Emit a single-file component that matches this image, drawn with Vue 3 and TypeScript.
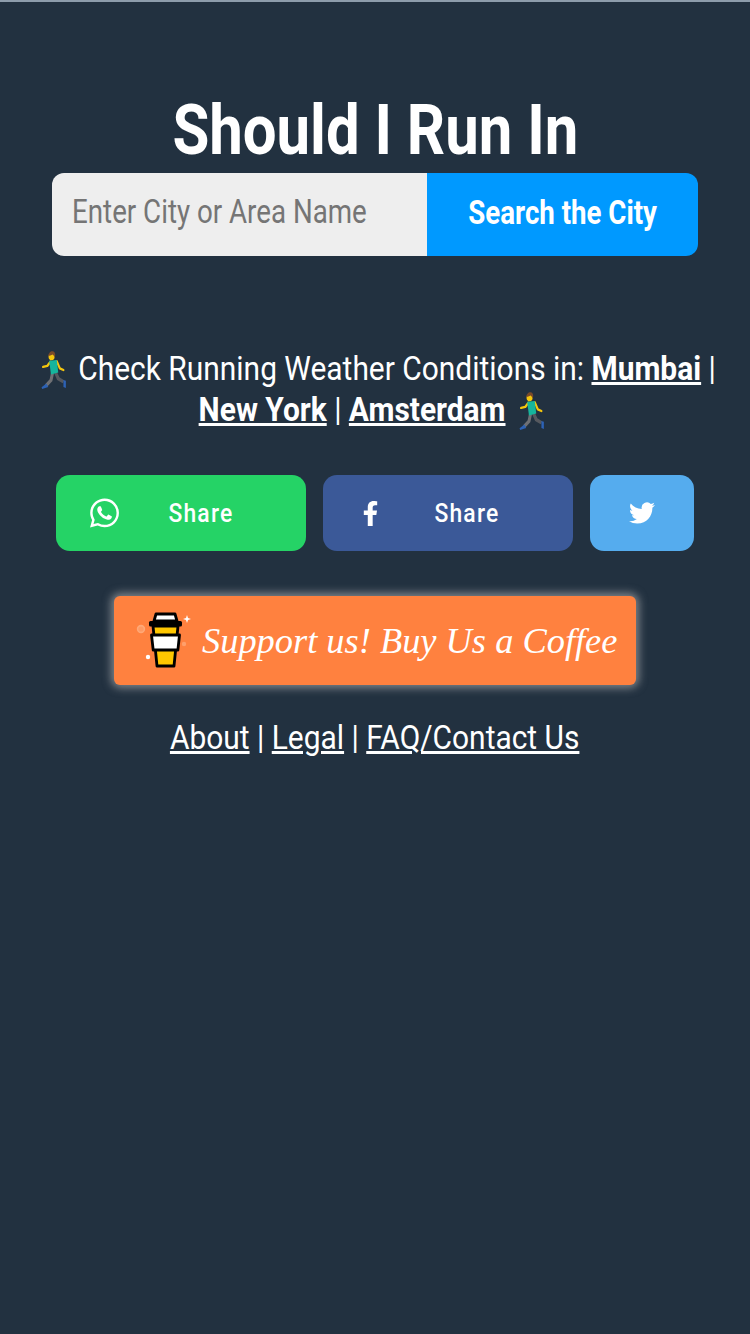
<script setup lang="ts">
const quick: string[] = ['Mumbai', 'New York', 'Amsterdam']
const footer: string[] = ['About', 'Legal', 'FAQ/Contact Us']
</script>

<template>
  <div class="page">
    <div class="strip"></div>
    <h1 class="title"><span class="narrow title-text">Should I Run In</span></h1>
    <form class="search" @submit.prevent>
      <div class="field"><span class="narrow-left">Enter City or Area Name</span></div>
      <button class="go" type="button"><span class="narrow go-text">Search the City</span></button>
    </form>

    <div class="check">
      <div class="line line-one">
        <span class="narrow">
          <svg class="runner first" viewBox="0 0 80 110" aria-hidden="true">
            <defs>
              <g id="run">
                <path d="M46 62l9 18 17 9" fill="none" stroke="#55585e" stroke-width="10" stroke-linejoin="round" />
                <path d="M72 84l8 2 0 21-8-3z" fill="#2d62b5" />
                <path d="M36 64l-5 21-16 15" fill="none" stroke="#6f7074" stroke-width="10" stroke-linejoin="round" />
                <path d="M16 94l-16 11 2 5 20-6z" fill="#2d62b5" />
                <path d="M50 30l10 20 12 5" fill="none" stroke="#f5c60d" stroke-width="7" stroke-linecap="round" stroke-linejoin="round" />
                <path d="M29 31l-10 12-14 3" fill="none" stroke="#f5c60d" stroke-width="7" stroke-linecap="round" stroke-linejoin="round" />
                <path d="M25 28l25-2 5 36-24 6z" fill="#16b59c" />
                <circle cx="33" cy="17" r="10" fill="#f5c60d" />
                <path d="M22 16c0-10 8-16 15-15 8 2 9 10 7 17l-7-8c-6 3-10 2-15 6z" fill="#7a4a2a" />
              </g>
            </defs>
            <use href="#run" />
          </svg>
          Check Running Weather Conditions in: <a href="#" class="bold">{{ quick[0] }}</a> |
        </span>
      </div>
      <div class="line line-two">
        <span class="narrow">
          <a href="#" class="bold">{{ quick[1] }}</a> | <a href="#" class="bold">{{ quick[2] }}</a>
          <svg class="runner last" viewBox="0 0 80 110" aria-hidden="true"><use href="#run" /></svg>
        </span>
      </div>
    </div>

    <div class="shares">
      <a class="share wa" href="#">
        <svg class="wa-ic" viewBox="0 0 24 24"><path fill="#fff" d="M17.472 14.382c-.297-.149-1.758-.867-2.03-.967-.273-.099-.471-.148-.67.15-.197.297-.767.966-.94 1.164-.173.199-.347.223-.644.075-.297-.15-1.255-.463-2.39-1.475-.883-.788-1.48-1.761-1.653-2.059-.173-.297-.018-.458.13-.606.134-.133.298-.347.446-.52.149-.174.198-.298.298-.497.099-.198.05-.371-.025-.52-.075-.149-.669-1.612-.916-2.207-.242-.579-.487-.5-.669-.51-.173-.008-.371-.01-.57-.01-.198 0-.52.074-.792.372-.272.297-1.04 1.016-1.04 2.479 0 1.462 1.065 2.875 1.213 3.074.149.198 2.096 3.2 5.077 4.487.709.306 1.262.489 1.694.625.712.227 1.36.195 1.871.118.571-.085 1.758-.719 2.006-1.413.248-.694.248-1.289.173-1.413-.074-.124-.272-.198-.57-.347m-5.421 7.403h-.004a9.87 9.87 0 01-5.031-1.378l-.361-.214-3.741.982.998-3.648-.235-.374a9.86 9.86 0 01-1.51-5.26c.001-5.45 4.436-9.884 9.888-9.884 2.64 0 5.122 1.03 6.988 2.898a9.825 9.825 0 012.893 6.994c-.003 5.45-4.437 9.884-9.885 9.884m8.413-18.297A11.815 11.815 0 0012.05 0C5.495 0 .16 5.335.157 11.892c0 2.096.547 4.142 1.588 5.945L.057 24l6.305-1.654a11.882 11.882 0 005.683 1.448h.005c6.554 0 11.89-5.335 11.893-11.893a11.821 11.821 0 00-3.48-8.413z"/></svg>
        <span class="share-label wa-label"><span class="narrow">Share</span></span>
      </a>
      <a class="share fb" href="#">
        <svg class="fb-ic" viewBox="0 0 320 512"><path fill="#fff" d="M279.14 288l14.22-92.66h-88.91v-60.13c0-25.35 12.42-50.06 52.24-50.06h40.42V6.26S260.43 0 225.36 0c-73.22 0-121.08 44.38-121.08 124.72v70.62H22.89V288h81.39v224h100.17V288z"/></svg>
        <span class="share-label fb-label"><span class="narrow">Share</span></span>
      </a>
      <a class="tw" href="#">
        <svg class="tw-ic" viewBox="0 0 24 24"><path fill="#fff" d="M23.953 4.57a10 10 0 01-2.825.775 4.958 4.958 0 002.163-2.723c-.951.555-2.005.959-3.127 1.184a4.92 4.92 0 00-8.384 4.482C7.69 8.095 4.067 6.13 1.64 3.162a4.822 4.822 0 00-.666 2.475c0 1.71.87 3.213 2.188 4.096a4.904 4.904 0 01-2.228-.616v.06a4.923 4.923 0 003.946 4.827 4.996 4.996 0 01-2.212.085 4.936 4.936 0 004.604 3.417 9.867 9.867 0 01-6.102 2.105c-.39 0-.779-.023-1.17-.067a13.995 13.995 0 007.557 2.209c9.053 0 13.998-7.496 13.998-13.985 0-.21 0-.42-.015-.63A9.935 9.935 0 0024 4.59z"/></svg>
      </a>
    </div>

    <a class="coffee" href="#">
      <svg class="cup" viewBox="0 0 56 60" aria-hidden="true">
        <circle cx="5" cy="18" r="3.4" fill="#ff9a63" stroke="#ffa877" stroke-width="1.6" />
        <circle cx="48" cy="33" r="2.2" fill="#ff9f6b" />
        <circle cx="12" cy="46" r="2.2" fill="#fff" />
        <path d="M51 4l1 3 3 1-3 1-1 3-1-3-3-1 3-1z" fill="#fff" />
        <path d="M17 15h25l-4 40H21z" fill="#ffc700" stroke="#000" stroke-width="2.8" stroke-linejoin="round" />
        <path d="M15.5 24h28l-1.6 15H17.2z" fill="#fff" stroke="#000" stroke-width="2.8" stroke-linejoin="round" />
        <path d="M20 3h19l2 7H18z" fill="#fff" stroke="#000" stroke-width="2.8" stroke-linejoin="round" />
        <rect x="13" y="10" width="33" height="5.5" rx="1.5" fill="#000" />
      </svg>
      <span class="coffee-text">Support us! Buy Us a Coffee</span>
    </a>

    <div class="foot">
      <span class="narrow">
        <a href="#">{{ footer[0] }}</a> | <a href="#">{{ footer[1] }}</a> | <a href="#">{{ footer[2] }}</a>
      </span>
    </div>
  </div>
</template>

<style>
html, body { margin: 0; background: #223140; }
</style>

<style scoped>
.page {
  min-height: 1334px;
  box-sizing: border-box;
  background: #223140;
  color: #fff;
  font-family: Roboto, "Liberation Sans", sans-serif;
  display: flex;
  flex-direction: column;
  align-items: center;
  text-align: center;
  overflow: hidden;
}
.strip { align-self: stretch; height: 2px; background: #8d9cab; }
.narrow { display: inline-block; white-space: nowrap; transform: scaleX(.88); }
.narrow-left { display: inline-block; white-space: nowrap; transform: scaleX(.84); transform-origin: left center; }
.title-text { transform: scaleX(.855); }
.go-text { transform: scaleX(.838); }
.title { margin: 90px 0 0; height: 81px; line-height: 76px; font-size: 70px; font-weight: 700; }
.search { width: 646px; height: 83px; display: flex; border-radius: 12px; overflow: hidden; }
.field { flex: 1; background: #eee; color: #757575; font-size: 33px; line-height: 77px; text-align: left; padding-left: 20px; }
.go { width: 271px; border: 0; background: #0099ff; color: #fff; font: 700 33px Roboto, sans-serif; padding: 0 0 4px; }
.check { margin-top: 92px; font-size: 34px; line-height: 41px; }
.line { display: flex; justify-content: center; }
.line-one { padding-left: 6px; }
.line-two { padding-right: 6px; }
.bold { font-weight: 700; }
a { color: #fff; text-decoration: underline; }
.runner { display: inline-block; width: 31px; height: 38px; vertical-align: -9px; }
.runner.first { margin-right: 4px; }
.runner.last { margin-left: 14px; }
.shares { margin-top: 45px; display: flex; gap: 17px; }
.share, .tw { height: 76px; border-radius: 14px; display: flex; align-items: center; text-decoration: none; box-sizing: border-box; }
.share { width: 250px; }
.wa { background: #25d366; padding-left: 34px; }
.fb { background: #3b5998; padding-left: 39px; }
.tw { width: 104px; background: #55acee; justify-content: center; }
.wa-ic { width: 29px; height: 32px; flex: none; }
.fb-ic { width: 17px; height: 25px; flex: none; }
.tw-ic { width: 26px; height: 26px; }
.share-label { flex: 1; text-align: center; font-size: 26px; font-weight: 500; letter-spacing: 1.35px; }
.wa-label { padding-right: 24px; }
.fb-label { padding-right: 18px; }
.coffee {
  margin-top: 45px;
  width: 522px; height: 89px;
  background: #ff813f;
  border-radius: 6px;
  box-shadow: 0 0 9px 3px rgba(190, 190, 190, .6);
  display: flex; align-items: center;
  text-decoration: none;
  box-sizing: border-box;
  padding-left: 22px;
}
.cup { width: 56px; height: 60px; flex: none; }
.coffee-text { margin-left: 10px; font: italic 400 36.4px "Liberation Serif", serif; white-space: nowrap; color: #fff; }
.foot { margin-top: 31px; font-size: 34px; line-height: 42px; }
</style>
